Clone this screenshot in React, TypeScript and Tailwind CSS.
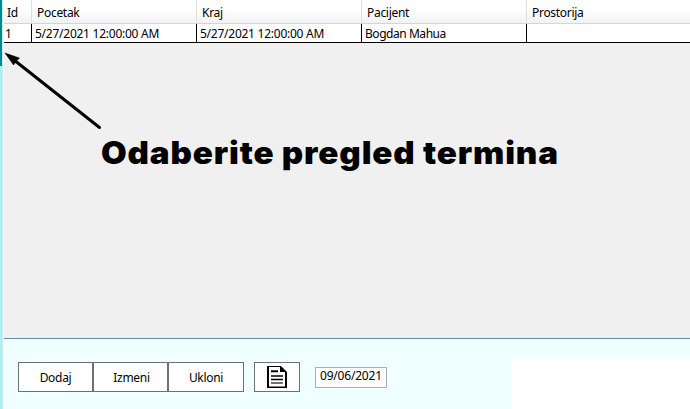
const columns = [
  { title: "Id", value: "1", width: "w-7", spacing: "" },
  { title: "Pocetak", value: "5/27/2021 12:00:00 AM", width: "w-[165px]", spacing: "tracking-[-0.25px]" },
  { title: "Kraj", value: "5/27/2021 12:00:00 AM", width: "w-[165px]", spacing: "tracking-[-0.25px]" },
  { title: "Pacijent", value: "Bogdan Mahua", width: "w-[165px]", spacing: "tracking-[-0.45px]" },
  { title: "Prostorija", value: "", width: "w-[164px]", spacing: "" },
];

function AppointmentTable() {
  return (
    <div className="relative h-[339px] border-b border-[#688caf] bg-[#f0f0f0]">
      <div className="flex h-6 border-b border-[#d5d5d5] bg-linear-to-b from-white from-40% to-[#f1f2f4]">
        {columns.map((c) => (
          <div
            key={c.title}
            className={`${c.width} shrink-0 border-r border-[#dedfe1] pl-[5px] pt-[4px] leading-[18px] first:pl-[3px]`}
          >
            {c.title}
          </div>
        ))}
      </div>
      <div className="flex h-[19px] border-b border-black bg-white">
        {columns.map((c) => (
          <div
            key={c.title}
            className={`${c.width} ${c.spacing} shrink-0 whitespace-nowrap border-r border-black pl-[3px] pt-px leading-[18px] first:pl-px last:border-r-0`}
          >
            {c.value}
          </div>
        ))}
      </div>
      <svg className="absolute left-0 top-[50px]" width="100" height="82" viewBox="0 0 100 82">
        <path d="M10 10 L95.500 77.500" stroke="#000" strokeWidth="3" strokeLinecap="round" />
        <path d="M1 3 L15.500 8 L12.500 11 L9.500 15 Z" fill="#000" stroke="#000" strokeWidth="0.500" />
      </svg>
      <div className="absolute left-[97px] top-[133px] origin-left scale-x-[1.07] whitespace-nowrap font-['Inter'] text-[31px] font-black leading-10 tracking-[0.8px]">
        Odaberite pregled termina
      </div>
    </div>
  );
}

function DocumentIcon() {
  return (
    <svg width="20" height="22" viewBox="0 0 20 22">
      <path d="M0 0H14L20 6V22H0Z" fill="#000" />
      <path d="M2 1H13V6H18V20.500H2Z" fill="#fff" />
      <path d="M4 4.500H11" stroke="#666" strokeWidth="1" />
      <path d="M4 5.500H11M4 10H16M4 13.500H16" stroke="#000" strokeWidth="1.500" />
      <path d="M4 17H16" stroke="#444" strokeWidth="1.500" />
    </svg>
  );
}

export default function App() {
  return (
    <div className="flex h-[409px] w-[690px] overflow-hidden bg-[#f0ffff] font-['Noto_Sans','Open_Sans',sans-serif] text-[12px] tracking-[-0.3px] text-black">
      <div className="flex w-0.5 shrink-0 flex-col">
        <div className="h-[66px] bg-[#008b8b]" />
        <div className="grow bg-[#afeeee]" />
      </div>
      <div className="w-px shrink-0 bg-[#c8eeee]" />
      <div className="min-w-0 grow pl-px">
        <AppointmentTable />
        <div className="flex h-[70px]">
          <div className="flex w-[508px] shrink-0 items-start pl-3.5 pt-[23px]">
            <div className="flex h-[30px] w-[226px] border border-[#707070] bg-white">
              <button className="w-[75px] border-r-2 border-[#707070] pt-0.5">Dodaj</button>
              <button className="w-[75px] border-r-2 border-[#707070] pl-0.5 pt-0.5">Izmeni</button>
              <button className="grow pt-0.5">Ukloni</button>
            </div>
            <button className="ml-2.5 flex h-[30px] w-[46px] items-center justify-center border border-[#707070] bg-white">
              <DocumentIcon />
            </button>
            <div className="ml-[15px] mt-[5px] h-[21px] w-[72px] border border-[#abadb3] bg-white pl-1 leading-4 tracking-[-0.2px]">
              09/06/2021
            </div>
          </div>
          <div className="mt-[19px] grow bg-white" />
        </div>
      </div>
    </div>
  );
}
